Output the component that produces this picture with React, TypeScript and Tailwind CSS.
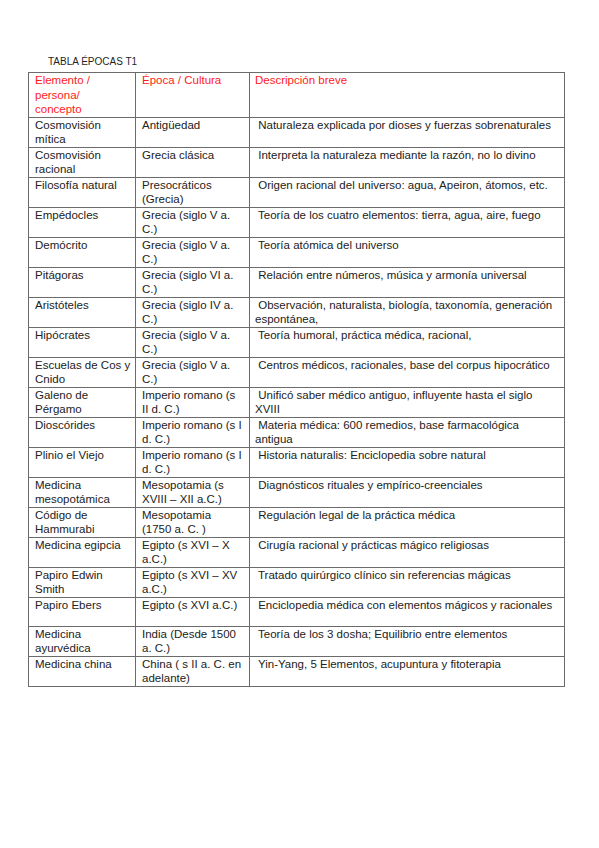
type Row = [string[], string[], string[]]

const head: Row = [["Elemento /", "persona/", "concepto"], ["Época / Cultura"], ["Descripción breve"]]

const rows: Row[] = [
  [["Cosmovisión", "mítica"], ["Antigüedad"], [" Naturaleza explicada por dioses y fuerzas sobrenaturales"]],
  [["Cosmovisión", "racional"], ["Grecia clásica"], [" Interpreta la naturaleza mediante la razón, no lo divino"]],
  [["Filosofía natural"], ["Presocráticos", "(Grecia)"], [" Origen racional del universo: agua, Apeiron, átomos, etc."]],
  [["Empédocles"], ["Grecia (siglo V a.", "C.)"], [" Teoría de los cuatro elementos: tierra, agua, aire, fuego"]],
  [["Demócrito"], ["Grecia (siglo V a.", "C.)"], [" Teoría atómica del universo"]],
  [["Pitágoras"], ["Grecia (siglo VI a.", "C.)"], [" Relación entre números, música y armonía universal"]],
  [["Aristóteles"], ["Grecia (siglo IV a.", "C.)"], [" Observación, naturalista, biología, taxonomía, generación", "espontánea,"]],
  [["Hipócrates"], ["Grecia (siglo V a.", "C.)"], [" Teoría humoral, práctica médica, racional,"]],
  [["Escuelas de Cos y", "Cnido"], ["Grecia (siglo V a.", "C.)"], [" Centros médicos, racionales, base del corpus hipocrático"]],
  [["Galeno de", "Pérgamo"], ["Imperio romano (s", "II d. C.)"], [" Unificó saber médico antiguo, influyente hasta el siglo", "XVIII"]],
  [["Dioscórides"], ["Imperio romano (s I", "d. C.)"], [" Materia médica: 600 remedios, base farmacológica", "antigua"]],
  [["Plinio el Viejo"], ["Imperio romano (s I", "d. C.)"], [" Historia naturalis: Enciclopedia sobre natural"]],
  [["Medicina", "mesopotámica"], ["Mesopotamia (s", "XVIII – XII a.C.)"], [" Diagnósticos rituales y empírico-creenciales"]],
  [["Código de", "Hammurabi"], ["Mesopotamia", "(1750 a. C. )"], [" Regulación legal de la práctica médica"]],
  [["Medicina egipcia"], ["Egipto (s XVI – X", "a.C.)"], [" Cirugía racional y prácticas mágico religiosas"]],
  [["Papiro Edwin", "Smith"], ["Egipto (s XVI – XV", "a.C.)"], [" Tratado quirúrgico clínico sin referencias mágicas"]],
  [["Papiro Ebers"], ["Egipto (s XVI a.C.)"], [" Enciclopedia médica con elementos mágicos y racionales"]],
  [["Medicina", "ayurvédica"], ["India (Desde 1500", "a. C.)"], [" Teoría de los 3 dosha; Equilibrio entre elementos"]],
  [["Medicina china"], ["China ( s II a. C. en", "adelante)"], [" Yin-Yang, 5 Elementos, acupuntura y fitoterapia"]],
]

function Cell({ lines, last }: { lines: string[]; last?: boolean }) {
  return (
    <td className={"border border-[#6b6b6b] align-top p-0 " + (last ? "pl-[5px]" : "pl-[6px]")}>
      {lines.map((l, i) => (
        <div key={i} className="whitespace-pre leading-[14.5px]">{l}</div>
      ))}
    </td>
  )
}

export default function App() {
  return (
    <div className="w-[599px] h-[848px] bg-white pl-[28px] pt-[54px] font-['Liberation_Sans',Arial,sans-serif]">
      <div className="ml-[20px] text-[10px] leading-[15px] text-[#1f1f1f]">TABLA ÉPOCAS T1</div>
      <table className="mt-[3px] w-[536px] table-fixed border-collapse text-[11.5px] text-[#222]">
        <colgroup>
          <col className="w-[107px]" />
          <col className="w-[114px]" />
          <col className="w-[315px]" />
        </colgroup>
        <thead>
          <tr className="h-[44px] text-[#ff1a1a]">
            <Cell lines={head[0]} />
            <Cell lines={head[1]} />
            <Cell lines={head[2]} last />
          </tr>
        </thead>
        <tbody>
          {rows.map((r, i) => (
            <tr key={i} className="h-[29px]">
              <Cell lines={r[0]} />
              <Cell lines={r[1]} />
              <Cell lines={r[2]} last />
            </tr>
          ))}
        </tbody>
      </table>
    </div>
  )
}
